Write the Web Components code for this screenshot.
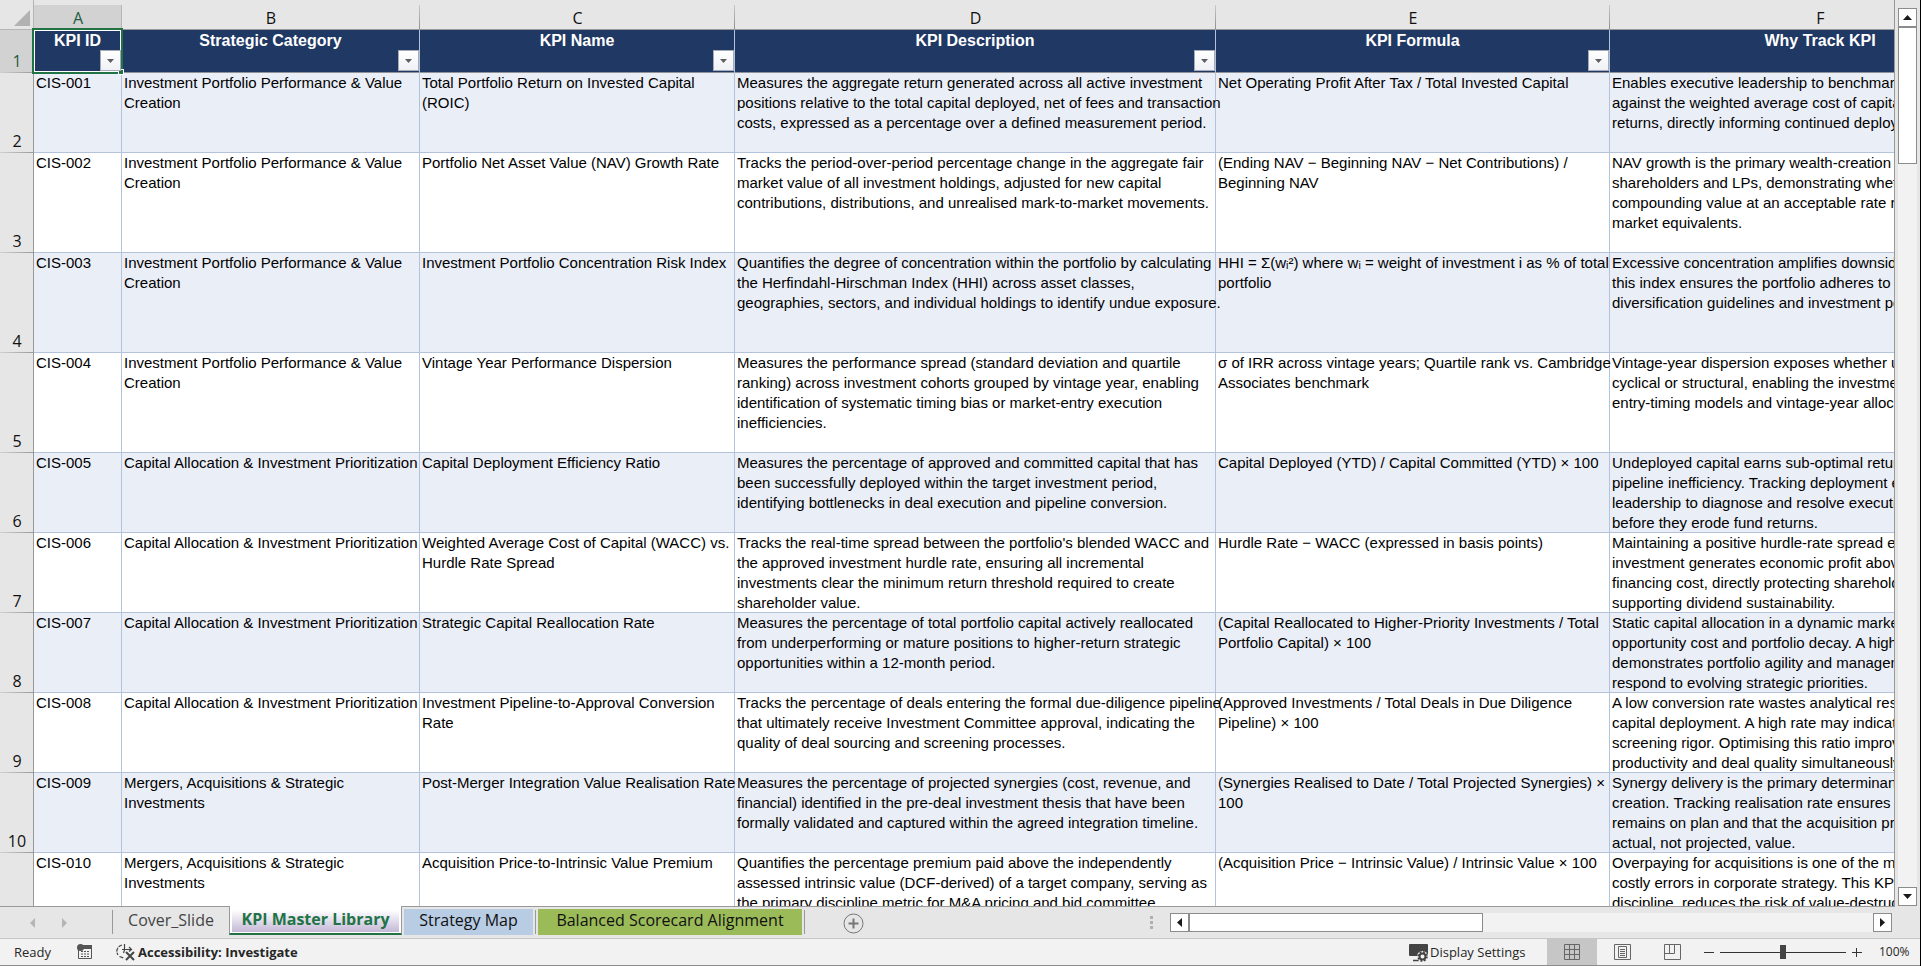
<!DOCTYPE html>
<html lang="en">
<head>
<meta charset="utf-8">
<title>KPI Master Library</title>
<style>
  html, body {
    height: 100%;
    margin: 0;
    overflow: hidden;
  }
  body {
    background: #e6e6e6;
    font-family: "Liberation Sans", Arial, sans-serif;
  }
</style>
</head>
<body>
<workbook-window></workbook-window>

<script>
const COLUMNS = [
  { letter: 'A', title: 'KPI ID', width: 88 },
  { letter: 'B', title: 'Strategic Category', width: 298 },
  { letter: 'C', title: 'KPI Name', width: 315 },
  { letter: 'D', title: 'KPI Description', width: 481 },
  { letter: 'E', title: 'KPI Formula', width: 394 },
  { letter: 'F', title: 'Why Track KPI', width: 421 }
];

const PERFORMANCE = 'Investment Portfolio Performance & Value\nCreation';
const ALLOCATION = 'Capital Allocation & Investment Prioritization';
const MERGERS = 'Mergers, Acquisitions & Strategic\nInvestments';

// height in px, then the cells from A to F
const ROWS = [
  [80, 'CIS-001', PERFORMANCE,
    'Total Portfolio Return on Invested Capital\n(ROIC)',
    'Measures the aggregate return generated across all active investment\npositions relative to the total capital deployed, net of fees and transaction\ncosts, expressed as a percentage over a defined measurement period.',
    'Net Operating Profit After Tax / Total Invested Capital',
    'Enables executive leadership to benchmark\nagainst the weighted average cost of capital\nreturns, directly informing continued deployment'],
  [100, 'CIS-002', PERFORMANCE,
    'Portfolio Net Asset Value (NAV) Growth Rate',
    'Tracks the period-over-period percentage change in the aggregate fair\nmarket value of all investment holdings, adjusted for new capital\ncontributions, distributions, and unrealised mark-to-market movements.',
    '(Ending NAV − Beginning NAV − Net Contributions) /\nBeginning NAV',
    'NAV growth is the primary wealth-creation metric\nshareholders and LPs, demonstrating whether\ncompounding value at an acceptable rate relative\nmarket equivalents.'],
  [100, 'CIS-003', PERFORMANCE,
    'Investment Portfolio Concentration Risk Index',
    'Quantifies the degree of concentration within the portfolio by calculating\nthe Herfindahl-Hirschman Index (HHI) across asset classes,\ngeographies, sectors, and individual holdings to identify undue exposure.',
    'HHI = Σ(wᵢ²) where wᵢ = weight of investment i as % of total\nportfolio',
    'Excessive concentration amplifies downside\nthis index ensures the portfolio adheres to a\ndiversification guidelines and investment policy'],
  [100, 'CIS-004', PERFORMANCE,
    'Vintage Year Performance Dispersion',
    'Measures the performance spread (standard deviation and quartile\nranking) across investment cohorts grouped by vintage year, enabling\nidentification of systematic timing bias or market-entry execution\ninefficiencies.',
    'σ of IRR across vintage years; Quartile rank vs. Cambridge\nAssociates benchmark',
    'Vintage-year dispersion exposes whether underperformance\ncyclical or structural, enabling the investment\nentry-timing models and vintage-year allocation'],
  [80, 'CIS-005', ALLOCATION,
    'Capital Deployment Efficiency Ratio',
    'Measures the percentage of approved and committed capital that has\nbeen successfully deployed within the target investment period,\nidentifying bottlenecks in deal execution and pipeline conversion.',
    'Capital Deployed (YTD) / Capital Committed (YTD) × 100',
    'Undeployed capital earns sub-optimal returns\npipeline inefficiency. Tracking deployment efficiency\nleadership to diagnose and resolve execution\nbefore they erode fund returns.'],
  [80, 'CIS-006', ALLOCATION,
    'Weighted Average Cost of Capital (WACC) vs.\nHurdle Rate Spread',
    "Tracks the real-time spread between the portfolio's blended WACC and\nthe approved investment hurdle rate, ensuring all incremental\ninvestments clear the minimum return threshold required to create\nshareholder value.",
    'Hurdle Rate − WACC (expressed in basis points)',
    'Maintaining a positive hurdle-rate spread ensures\ninvestment generates economic profit above\nfinancing cost, directly protecting shareholder\nsupporting dividend sustainability.'],
  [80, 'CIS-007', ALLOCATION,
    'Strategic Capital Reallocation Rate',
    'Measures the percentage of total portfolio capital actively reallocated\nfrom underperforming or mature positions to higher-return strategic\nopportunities within a 12-month period.',
    '(Capital Reallocated to Higher-Priority Investments / Total\nPortfolio Capital) × 100',
    'Static capital allocation in a dynamic market\nopportunity cost and portfolio decay. A high rate\ndemonstrates portfolio agility and management\nrespond to evolving strategic priorities.'],
  [80, 'CIS-008', ALLOCATION,
    'Investment Pipeline-to-Approval Conversion\nRate',
    'Tracks the percentage of deals entering the formal due-diligence pipeline\nthat ultimately receive Investment Committee approval, indicating the\nquality of deal sourcing and screening processes.',
    '(Approved Investments / Total Deals in Due Diligence\nPipeline) × 100',
    'A low conversion rate wastes analytical resources\ncapital deployment. A high rate may indicate\nscreening rigor. Optimising this ratio improves\nproductivity and deal quality simultaneously.'],
  [80, 'CIS-009', MERGERS,
    'Post-Merger Integration Value Realisation Rate',
    'Measures the percentage of projected synergies (cost, revenue, and\nfinancial) identified in the pre-deal investment thesis that have been\nformally validated and captured within the agreed integration timeline.',
    '(Synergies Realised to Date / Total Projected Synergies) ×\n100',
    'Synergy delivery is the primary determinant\ncreation. Tracking realisation rate ensures integration\nremains on plan and that the acquisition price\nactual, not projected, value.'],
  [80, 'CIS-010', MERGERS,
    'Acquisition Price-to-Intrinsic Value Premium',
    'Quantifies the percentage premium paid above the independently\nassessed intrinsic value (DCF-derived) of a target company, serving as\nthe primary discipline metric for M&A pricing and bid committee',
    '(Acquisition Price − Intrinsic Value) / Intrinsic Value × 100',
    'Overpaying for acquisitions is one of the most\ncostly errors in corporate strategy. This KPI\ndiscipline, reduces the risk of value-destructive']
];

// filter-button.js
class FilterButton extends HTMLElement {
  constructor() {
    super();
    this.attachShadow({ mode: 'open' });
    this.shadowRoot.innerHTML = `
      <style>
        :host { display: block; width: 21px; height: 21px; }
        button {
          display: flex;
          align-items: center;
          justify-content: center;
          width: 100%;
          height: 100%;
          box-sizing: border-box;
          padding: 0;
          border: 1px solid #a6abb5;
          background: linear-gradient(#fff, #eff1f6);
        }
      </style>
      <button type="button">
        <svg width="7" height="4" viewBox="0 0 7 4"><path d="M0 0h7L3.5 4z" fill="#5f5f5f"/></svg>
      </button>
    `;
  }

  connectedCallback() {
    this.shadowRoot.querySelector('button').setAttribute('aria-label', 'Filter ' + this.getAttribute('column'));
  }
}
customElements.define('filter-button', FilterButton);

// sheet-grid.js
class SheetGrid extends HTMLElement {
  constructor() {
    super();
    this.attachShadow({ mode: 'open' });
    this.shadowRoot.innerHTML = `
      <style>
        :host {
          display: block;
          overflow: hidden;
          background: #fff;
          border-right: 1px solid #999;
          border-bottom: 1px solid #999;
          box-sizing: border-box;
        }
        table {
          table-layout: fixed;
          border-collapse: separate;
          border-spacing: 0;
        }
        th, td {
          padding: 0;
          vertical-align: top;
          font-weight: normal;
        }
        .letter, .number, .corner {
          background-color: #e6e6e6;
          background-repeat: no-repeat;
          font-family: "Open Sans", "Noto Sans", sans-serif;
          font-size: 16px;
          line-height: 22px;
          color: #111;
        }
        .letter {
          height: 30px;
          padding-top: 7px;
          box-sizing: border-box;
          border-bottom: 1px solid #999;
          background-image: linear-gradient(#c9c9c9, #8f8f8f);
          background-size: 1px 24px;
          background-position: right bottom;
        }
        .number {
          vertical-align: bottom;
          padding-bottom: 1px;
          background-image: linear-gradient(to right, #d0d0d0, #999);
          background-size: 100% 1px;
          background-position: left bottom;
          box-shadow: inset -1px 0 #999;
        }
        .letter.active {
          color: #1f5c41;
          background-color: #e6e6e6;
          background-image: linear-gradient(#b5b5b5, #b5b5b5), linear-gradient(#d2d2d2, #d2d2d2);
          background-size: 1px 24px, 100% 24px;
        }
        .number.active {
          color: #1f5c41;
          background-color: #d2d2d2;
        }
        .corner {
          border-bottom: 1px solid #b5b5b5;
          box-shadow: inset -1px 0 #b5b5b5;
        }
        .corner svg { display: block; margin: 10px 0 0 14px; }

        .title {
          position: relative;
          height: 43px;
          background: #203864;
          color: #fff;
          font-size: 16px;
          font-weight: bold;
          line-height: 20px;
          box-shadow: inset -1px 0 #b4c2dc, inset 0 -1px #8f9399;
        }
        .title div {
          display: flex;
          flex-direction: column;
          justify-content: space-between;
          height: 43px;
          box-sizing: border-box;
          padding: 1px 1px 2px 0;
        }
        .title span { height: 19px; }
        .title filter-button { align-self: flex-end; }
        .title.selected filter-button { z-index: 2; }

        td {
          padding-left: 2px;
          font-size: 15px;
          line-height: 20px;
          color: #000;
          white-space: pre;
          box-shadow: inset -1px -1px #b4c2dc;
        }
        tr.band td { background: #eaeef7; }

        /* active cell frame and its fill handle */
        .frame {
          position: absolute;
          inset: -2px -1px -1px -2px;
          border: 2px solid #217346;
          box-shadow: inset 0 0 0 1px #fff;
          pointer-events: none;
          z-index: 1;
        }
        .frame::after {
          content: "";
          position: absolute;
          right: -3px;
          bottom: -3px;
          width: 4px;
          height: 4px;
          background: #217346;
          border: 1px solid #fff;
        }
      </style>
      <table>
        <colgroup></colgroup>
        <thead></thead>
        <tbody></tbody>
      </table>
    `;
    this._cols = this.shadowRoot.querySelector('colgroup');
    this._head = this.shadowRoot.querySelector('thead');
    this._body = this.shadowRoot.querySelector('tbody');
  }

  connectedCallback() {
    this._buildHead();
    this._buildBody();
  }

  _buildHead() {
    let total = 34;
    let cols = '<col style="width:34px">';
    let letters = `<th class="corner"><svg width="17" height="17" viewBox="0 0 17 17"><path d="M16 0v16H0z" fill="#b2b2b2"/></svg></th>`;
    let titles = '<th class="number active">1</th>';
    COLUMNS.forEach((c, i) => {
      total += c.width;
      cols += `<col style="width:${c.width}px">`;
      letters += `<th class="letter${i === 0 ? ' active' : ''}">${c.letter}</th>`;
      titles += `<th class="title${i === 0 ? ' selected' : ''}"><div><span>${c.title}</span>` +
        `<filter-button column="${c.title}"></filter-button></div>` +
        `${i === 0 ? '<i class="frame"></i>' : ''}</th>`;
    });
    this.shadowRoot.querySelector('table').style.width = total + 'px';
    this._cols.innerHTML = cols;
    this._head.innerHTML = `<tr>${letters}</tr><tr>${titles}</tr>`;
  }

  _buildBody() {
    ROWS.forEach(([height, ...cells], i) => {
      const tr = document.createElement('tr');
      tr.style.height = height + 'px';
      if (i % 2 === 0) tr.className = 'band';
      const num = document.createElement('th');
      num.className = 'number';
      num.textContent = i + 2;
      tr.appendChild(num);
      for (const text of cells) {
        const td = document.createElement('td');
        td.textContent = text;
        tr.appendChild(td);
      }
      this._body.appendChild(tr);
    });
  }
}
customElements.define('sheet-grid', SheetGrid);

// scroll-bar.js
class ScrollBar extends HTMLElement {
  constructor() {
    super();
    this.attachShadow({ mode: 'open' });
    this.shadowRoot.innerHTML = `
      <style>
        :host { display: flex; background: #f2f2f2; }
        :host([vertical]) { flex-direction: column; width: 19px; }
        :host(:not([vertical])) { height: 19px; }
        button {
          display: flex;
          align-items: center;
          justify-content: center;
          flex: none;
          width: 19px;
          height: 19px;
          box-sizing: border-box;
          padding: 0;
          border: 1px solid #8c8c8c;
          background: #fff;
        }
        .thumb {
          box-sizing: border-box;
          border: 1px solid #8c8c8c;
          background: #fff;
          flex: 0 0 var(--thumb);
        }
        .rest { flex: 1; }
        svg { fill: #1a1a1a; }
        :host([vertical]) svg { transform: rotate(90deg); }
      </style>
      <button type="button" aria-label="Scroll back"><svg width="5" height="9" viewBox="0 0 5 9"><path d="M5 0v9L0 4.5z"/></svg></button>
      <div class="thumb"></div>
      <div class="rest"></div>
      <button type="button" aria-label="Scroll forward"><svg width="5" height="9" viewBox="0 0 5 9"><path d="M0 0v9l5-4.5z"/></svg></button>
    `;
  }
}
customElements.define('scroll-bar', ScrollBar);

// sheet-tab.js
class SheetTab extends HTMLElement {
  constructor() {
    super();
    this.attachShadow({ mode: 'open' });
    this.shadowRoot.innerHTML = `
      <style>
        :host {
          display: block;
          box-sizing: border-box;
          height: 26px;
          min-width: var(--width);
          margin: 2px 2px 0;
          background: var(--tab, transparent);
        }
        button {
          display: block;
          width: 100%;
          height: 100%;
          box-sizing: border-box;
          padding: 0 8px 4px;
          border: 0;
          background: none;
          font: 16px/22px "Open Sans", "Noto Sans", sans-serif;
          color: #111;
          white-space: nowrap;
        }
        :host([plain]) button { color: #444; }
        :host([active]) {
          height: 29px;
          margin: -1px 0 0;
          padding: 0 2px;
          background: #fff;
          border: solid #999;
          border-width: 0 1px;
          border-bottom: 2px solid #217346;
        }
        :host([active]) button {
          height: 26px;
          padding-bottom: 0;
          background: linear-gradient(#fff 15%, #c4b8d6);
          font-weight: bold;
          color: #217346;
        }
      </style>
      <button type="button" role="tab"><slot></slot></button>
    `;
  }
}
customElements.define('sheet-tab', SheetTab);

// tab-strip.js
class TabStrip extends HTMLElement {
  constructor() {
    super();
    this.attachShadow({ mode: 'open' });
    this.shadowRoot.innerHTML = `
      <style>
        :host {
          display: flex;
          align-items: flex-start;
          height: 31px;
          background: #e6e6e6;
        }
        .nav, .add {
          border: 0;
          padding: 0;
          background: none;
          display: block;
        }
        .nav { width: 32px; height: 31px; }
        .nav svg { display: block; margin: 0 auto; fill: #b5b5b5; }
        .navs { display: flex; width: 112px; box-sizing: border-box; padding-left: 16px; }
        .sep { width: 1px; height: 24px; margin-top: 3px; background: #999; flex: none; }
        .add { margin: 6px 0 0 38px; }
        .add svg { display: block; }
        .grip { display: flex; flex-direction: column; gap: 2px; margin: 9px 17px 0 auto; }
        .grip i { width: 3px; height: 3px; background: #b0b0b0; }
        scroll-bar { --thumb: 294px; flex: 0 0 722px; margin: 6px 28px 0 0; }
      </style>
      <div class="navs">
        <button class="nav" type="button" aria-label="Previous sheet"><svg width="5" height="10" viewBox="0 0 5 10"><path d="M5 0v10L0 5z"/></svg></button>
        <button class="nav" type="button" aria-label="Next sheet"><svg width="5" height="10" viewBox="0 0 5 10"><path d="M0 0v10l5-5z"/></svg></button>
      </div>
      <span class="sep"></span>
      <sheet-tab plain style="--width:112px">Cover_Slide</sheet-tab>
      <sheet-tab active style="--width:173px">KPI Master Library</sheet-tab>
      <sheet-tab style="--width:129px;--tab:#b8cce4">Strategy Map</sheet-tab>
      <span class="sep"></span>
      <sheet-tab style="--width:264px;--tab:#9bbb59">Balanced Scorecard Alignment</sheet-tab>
      <span class="sep"></span>
      <button class="add" type="button" aria-label="New sheet">
        <svg width="21" height="21" viewBox="0 0 21 21" fill="none" stroke="#777"><circle cx="10.5" cy="10.5" r="9.5"/><path d="M5.500 10.500h10M10.500 5.500v10" stroke-width="2"/></svg>
      </button>
      <div class="grip"><i></i><i></i><i></i></div>
      <scroll-bar></scroll-bar>
    `;
  }
}
customElements.define('tab-strip', TabStrip);

// status-bar.js
class StatusBar extends HTMLElement {
  constructor() {
    super();
    this.attachShadow({ mode: 'open' });
    this.shadowRoot.innerHTML = `
      <style>
        :host {
          display: flex;
          align-items: center;
          height: 28px;
          box-sizing: border-box;
          border-top: 1px solid #c6c6c6;
          border-bottom: 1px solid #8c8c8c;
          background: #f2f2f2;
          font: 13px/20px "Open Sans", "Noto Sans", sans-serif;
          color: #262626;
        }
        button {
          display: flex;
          align-items: center;
          border: 0;
          padding: 0;
          background: none;
          font: inherit;
          color: inherit;
          white-space: nowrap;
        }
        svg { display: block; flex: none; }
        .ready { width: 63px; padding-left: 14px; }
        .a11y { margin-left: 24px; gap: 3px; font-weight: bold; }
        .display { margin-left: auto; gap: 2px; width: 138px; }
        .view { justify-content: center; width: 50px; height: 26px; }
        .view.on { background: #c6c6c6; }
        .step { width: 10px; height: 20px; justify-content: center; }
        .zoom { display: flex; align-items: center; gap: 6px; margin-left: 7px; }
        input {
          appearance: none;
          width: 126px;
          height: 14px;
          margin: 0;
          background: linear-gradient(#333, #333) center / 100% 1px no-repeat;
        }
        input::-webkit-slider-thumb {
          appearance: none;
          width: 6px;
          height: 14px;
          background: #444;
        }
        .percent { width: 41px; margin-left: 17px; font-size: 12px; }
      </style>
      <span class="ready">Ready</span>
      <button type="button" aria-label="Record macro">
        <svg width="15" height="16" viewBox="0 0 15 16">
          <path d="M6 1h9v4H6z" fill="#555"/>
          <path d="M1.500 5v9.500h13V4" fill="none" stroke="#555"/>
          <path d="M4 7.500h9M4 10h9M4 12.500h9" stroke="#555" stroke-dasharray="2 1"/>
          <circle cx="3.500" cy="3.500" r="3.500" fill="#555"/>
        </svg>
      </button>
      <button class="a11y" type="button">
        <svg width="19" height="18" viewBox="0 0 19 18" fill="none" stroke="#444">
          <path d="M6 2A6.500 6.500 0 0 0 2 12M3.500 13.500l4 1.500" stroke-width="1.200" stroke-dasharray="4 1"/>
          <path d="M6 6.500h9M8.500 1v6l-1 3M13 4l2.500 2.500-2.500 2" stroke-width="1.200"/>
          <path d="M10 9l8 8M18 9l-8 8" stroke-width="2"/>
        </svg>
        <span>Accessibility: Investigate</span>
      </button>
      <button class="display" type="button">
        <svg width="19" height="19" viewBox="0 0 19 19">
          <path d="M1 1h17a1 1 0 0 1 1 1v11H1a1 1 0 0 1-1-1V2a1 1 0 0 1 1-1z" fill="#444"/>
          <path d="M4 17.500h6" stroke="#444" stroke-width="1.500"/>
          <circle cx="13.500" cy="13.500" r="5.500" fill="#f2f2f2"/>
          <circle cx="13.500" cy="13.500" r="3" fill="none" stroke="#444" stroke-width="2"/>
          <circle cx="13.500" cy="13.500" r="4.500" fill="none" stroke="#444" stroke-width="1.500" stroke-dasharray="2 1.530"/>
        </svg>
        <span>Display Settings</span>
      </button>
      <button class="view on" type="button" aria-label="Normal view">
        <svg width="17" height="16" viewBox="0 0 17 16" fill="none" stroke="#666"><path d="M.5.5h15v15H.5zM.5 5.500h15M.5 10.500h15M5.500.5v15M10.500.5v15"/></svg>
      </button>
      <button class="view" type="button" aria-label="Page layout">
        <svg width="17" height="16" viewBox="0 0 17 16" fill="none" stroke="#666"><path d="M.5.5h16v15H.5zM4.500 2.500h8v11h-8zM6 5.500h5M6 7.500h5M6 9.500h5M6 11.500h5"/></svg>
      </button>
      <button class="view" type="button" aria-label="Page break preview">
        <svg width="17" height="16" viewBox="0 0 17 16" fill="none" stroke="#666"><path d="M.5.5h16v15H.5zM.5 9.500h10v-9M5.500.5v9"/></svg>
      </button>
      <div class="zoom">
        <button class="step" type="button" aria-label="Zoom out"><svg width="10" height="11" viewBox="0 0 10 11" stroke="#333"><path d="M0 5.500h10"/></svg></button>
        <input type="range" min="10" max="190" value="100" aria-label="Zoom">
        <button class="step" type="button" aria-label="Zoom in"><svg width="10" height="11" viewBox="0 0 10 11" stroke="#333"><path d="M0 5.500h10M4.500 1v9"/></svg></button>
      </div>
      <span class="percent">100%</span>
    `;
  }
}
customElements.define('status-bar', StatusBar);

// workbook-window.js
class WorkbookWindow extends HTMLElement {
  constructor() {
    super();
    this.attachShadow({ mode: 'open' });
    this.shadowRoot.innerHTML = `
      <style>
        :host {
          display: flex;
          flex-direction: column;
          height: 100vh;
          box-sizing: border-box;
          background: #e6e6e6;
          border-right: 1px solid #000;
        }
        .main { display: flex; flex: 1; min-height: 0; }
        sheet-grid { flex: 1; min-width: 0; }
        scroll-bar { --thumb: 137px; margin: 8px 3px 1px; }
      </style>
      <div class="main">
        <sheet-grid></sheet-grid>
        <scroll-bar vertical></scroll-bar>
      </div>
      <tab-strip></tab-strip>
      <status-bar></status-bar>
    `;
  }
}
customElements.define('workbook-window', WorkbookWindow);
</script>
</body>
</html>
